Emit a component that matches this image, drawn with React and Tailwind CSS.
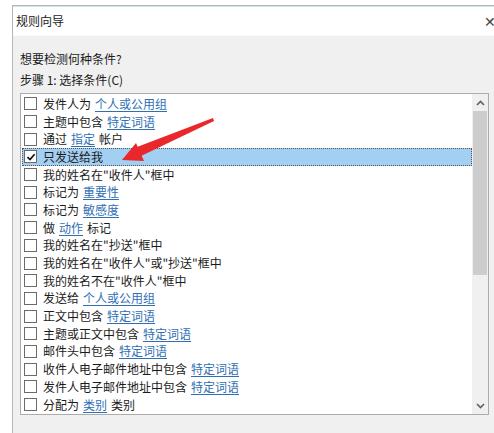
import React from "react";

const rows = [
  [["t", "发件人为"], ["l", "个人或公用组"]],
  [["t", "主题中包含"], ["l", "特定词语"]],
  [["t", "通过"], ["l", "指定"], ["t", "帐户"]],
  [["t", "只发送给我"]],
  [["t", '我的姓名在"收件人"框中']],
  [["t", "标记为"], ["l", "重要性"]],
  [["t", "标记为"], ["l", "敏感度"]],
  [["t", "做"], ["l", "动作"], ["t", "标记"]],
  [["t", '我的姓名在"抄送"框中']],
  [["t", '我的姓名在"收件人"或"抄送"框中']],
  [["t", '我的姓名不在"收件人"框中']],
  [["t", "发送给"], ["l", "个人或公用组"]],
  [["t", "正文中包含"], ["l", "特定词语"]],
  [["t", "主题或正文中包含"], ["l", "特定词语"]],
  [["t", "邮件头中包含"], ["l", "特定词语"]],
  [["t", "收件人电子邮件地址中包含"], ["l", "特定词语"]],
  [["t", "发件人电子邮件地址中包含"], ["l", "特定词语"]],
  [["t", "分配为"], ["l", "类别"], ["t", "类别"]],
];

const Row = ({ parts, checked }) => (
  <div
    className={
      "flex items-center h-[17.7px] pl-[2px] " +
      (checked ? "bg-[#a3cff3] outline outline-1 outline-dotted outline-[#555] -outline-offset-1" : "")
    }
  >
    <span className="w-[13px] h-[13px] border border-[#6b6b6b] bg-white flex items-center justify-center shrink-0">
      {checked && (
        <svg width="10" height="10" viewBox="0 0 10 10">
          <path d="M1.5 5.2 L4 7.6 L8.6 2.2" fill="none" stroke="#111" strokeWidth="1.7" />
        </svg>
      )}
    </span>
    <span className="ml-[6px] flex gap-[4px] whitespace-nowrap">
      {parts.map(([k, s], i) =>
        k === "l" ? (
          <span key={i} className="text-[#2f6fb3] underline underline-offset-2">
            {s}
          </span>
        ) : (
          <span key={i}>{s}</span>
        )
      )}
    </span>
  </div>
);

const App = () => {
  return (
    <div
      className="relative w-[494px] h-[433px] bg-white overflow-hidden text-[12px] text-[#1b1b1b]"
      style={{ fontFamily: '"Noto Sans CJK SC", "Noto Sans", sans-serif' }}
    >
      <div className="ml-[12px] mt-[5px] w-[490px] h-[428px] border-l border-t border-[#b5b5b5] flex flex-col">
        <div className="h-px bg-[#cfe3ef]" />
        <div className="h-[29px] bg-white flex items-center justify-between pl-[3px] pr-[6px] border-b border-[#fbfbf3]">
          <span>规则向导</span>
          <span className="text-[14px] text-[#444] font-light">✕</span>
        </div>
        <div className="flex-1 bg-[#f0f0f0] pl-[7px] pt-[14px]">
          <div className="leading-[18px]">想要检测何种条件?</div>
          <div className="leading-[18px] mt-[3px]">步骤 1: 选择条件(C)</div>
          <div className="mt-[4px] w-[469px] h-[322px] border border-[#acacac] bg-white flex">
            <div className="flex-1 pt-[1px] pl-px">
              {rows.map((p, i) => (
                <Row key={i} parts={p} checked={i === 3} />
              ))}
            </div>
            <div className="w-[16px] bg-[#f0f0f0] flex flex-col">
              <div className="h-[17px] flex items-center justify-center">
                <svg width="9" height="6" viewBox="0 0 9 6">
                  <path d="M1 5 L4.5 1.5 L8 5" fill="none" stroke="#606060" strokeWidth="1.6" />
                </svg>
              </div>
              <div className="h-[164px] mx-[1px] bg-[#cdcdcd]" />
              <div className="flex-1" />
              <div className="h-[17px] flex items-center justify-center">
                <svg width="9" height="6" viewBox="0 0 9 6">
                  <path d="M1 1 L4.5 4.5 L8 1" fill="none" stroke="#606060" strokeWidth="1.6" />
                </svg>
              </div>
            </div>
          </div>
        </div>
      </div>
      <svg className="absolute left-0 top-0 pointer-events-none" width="494" height="433">
        <polygon points="213,118 214,121 141,156 137,147" fill="#e8282a" />
        <polygon points="122,160 136,143 144,161" fill="#e8282a" />
      </svg>
    </div>
  );
};

export default App;
